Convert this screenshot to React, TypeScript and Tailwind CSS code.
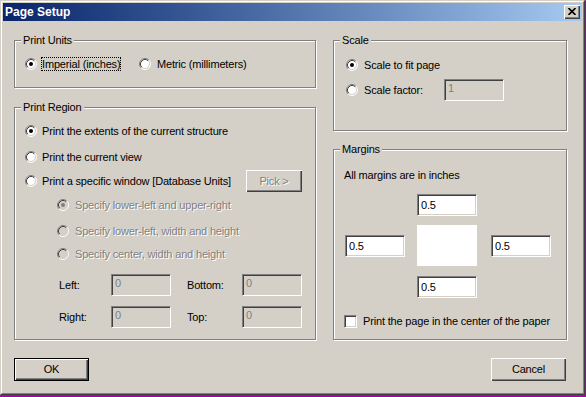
import React from "react";

const sunken =
  "border border-t-[#808080] border-l-[#808080] border-b-white border-r-white shadow-[inset_1px_1px_0_#404040,inset_-1px_-1px_0_#d4d0c8]";
const raised =
  "shadow-[inset_1px_1px_0_#fff,inset_-1px_-1px_0_#404040,inset_-2px_-2px_0_#808080]";
const disabledText = "text-[#808080] [text-shadow:1px_1px_0_#fff]";

function Radio({ checked = false, disabled = false }: { checked?: boolean; disabled?: boolean }) {
  return (
    <svg width="12" height="12" viewBox="0 0 12 12" className="shrink-0 block">
      <circle cx="6" cy="6" r="5" fill={disabled ? "#d4d0c8" : "#ffffff"} />
      <path d="M 2.11 9.89 A 5.5 5.5 0 0 1 9.89 2.11" stroke="#808080" strokeWidth="1" fill="none" />
      <path d="M 9.89 2.11 A 5.5 5.5 0 0 1 2.11 9.89" stroke="#ffffff" strokeWidth="1" fill="none" />
      <path d="M 2.82 9.18 A 4.5 4.5 0 0 1 9.18 2.82" stroke="#404040" strokeWidth="1" fill="none" />
      <path d="M 9.18 2.82 A 4.5 4.5 0 0 1 2.82 9.18" stroke="#d4d0c8" strokeWidth="1" fill="none" />
      {checked && <circle cx="6" cy="6" r="2" fill={disabled ? "#808080" : "#000000"} />}
    </svg>
  );
}

function Group({ label, className, children }: { label: string; className: string; children?: React.ReactNode }) {
  return (
    <div className={"relative border border-[#808080] shadow-[inset_1px_1px_0_#fff,1px_1px_0_#fff] " + className}>
      <span className="absolute left-[6px] top-[-8px] bg-[#d4d0c8] px-[2px] leading-[14px] whitespace-nowrap">
        {label}
      </span>
      {children}
    </div>
  );
}

function RadioRow({
  label,
  checked,
  disabled,
  focus,
  className = "",
  gap = "ml-[4px]",
}: {
  label: string;
  checked?: boolean;
  disabled?: boolean;
  focus?: boolean;
  className?: string;
  gap?: string;
}) {
  return (
    <div className={"flex items-center " + className}>
      <Radio checked={checked} disabled={disabled} />
      <span
        className={
          gap +
          " border leading-[12px] whitespace-nowrap " +
          (focus ? "border-dotted border-black " : "border-transparent ") +
          (disabled ? disabledText : "")
        }
      >
        {label}
      </span>
    </div>
  );
}

function Field({ value, disabled = false }: { value: string; disabled?: boolean }) {
  return (
    <div
      className={
        sunken +
        " w-[60px] h-[22px] shrink-0 flex items-start pl-[3px] " +
        (disabled ? "bg-[#d4d0c8] text-[#808080] pt-[1px]" : "bg-white text-black pt-[3px]")
      }
    >
      <span className="leading-[14px]">{value}</span>
    </div>
  );
}

export default function App() {
  return (
    <div className="w-[586px] h-[397px] bg-[#b000b0] overflow-hidden">
      <div
        className="w-[585px] h-[395px] bg-[#d4d0c8] border border-t-[#d4d0c8] border-l-[#d4d0c8] border-b-[#404040] border-r-[#404040] text-black text-[11px] tracking-[-0.17px]"
        style={{ fontFamily: '"Liberation Sans", Arial, sans-serif' }}
      >
        <div className="h-full border border-t-white border-l-white border-b-[#808080] border-r-[#808080] p-[1px] flex flex-col">
          {/* Title bar */}
          <div className="h-[18px] shrink-0 flex items-center justify-between bg-gradient-to-r from-[#0a246a] to-[#a6caf0] pl-[2px] pr-[2px]">
            <span className="text-white font-bold text-[12px] tracking-normal leading-[18px]">Page Setup</span>
            <div className={"w-[16px] h-[14px] bg-[#d4d0c8] flex items-center justify-center " + raised}>
              <svg width="8" height="7" viewBox="0 0 8 7" className="block -mt-[1px] -ml-[1px]">
                <path d="M0.5 0 L7.5 7 M7.5 0 L0.5 7" stroke="#000" strokeWidth="1.6" />
              </svg>
            </div>
          </div>

          {/* Body */}
          <div className="flex flex-col pt-[19px] pl-[11px]">
            <div className="flex gap-[17px]">
              {/* Left column */}
              <div className="flex flex-col gap-[19px] w-[302px]">
                <Group label="Print Units" className="h-[48px]">
                  <div className="flex items-center pt-[16px] pl-[10px] h-[30px]">
                    <div className="w-[114px]">
                      <RadioRow label="Imperial (inches)" checked focus />
                    </div>
                    <RadioRow label="Metric (millimeters)" gap="ml-[5px]" />
                  </div>
                </Group>

                <Group label="Print Region" className="h-[233px]">
                  <div className="flex flex-col pl-[10px]">
                    <RadioRow label="Print the extents of the current structure" checked className="mt-[16px] h-[14px]" />
                    <RadioRow label="Print the current view" className="mt-[12px] h-[14px]" />
                    <div className="mt-[6px] h-[22px] flex items-center pr-[13px]">
                      <RadioRow label="Print a specific window [Database Units]" />
                      <div
                        className={
                          "ml-auto w-[56px] h-[22px] bg-[#d4d0c8] flex items-center justify-center " +
                          raised +
                          " " +
                          disabledText
                        }
                      >
                        Pick &gt;
                      </div>
                    </div>
                    <div className="flex flex-col pl-[32px]">
                      <RadioRow label="Specify lower-left and upper-right" checked disabled gap="ml-[5px]" className="mt-[6px] h-[14px]" />
                      <RadioRow label="Specify lower-left, width and height" disabled gap="ml-[5px]" className="mt-[12px] h-[14px]" />
                      <RadioRow label="Specify center, width and height" disabled gap="ml-[5px]" className="mt-[9px] h-[14px]" />
                    </div>
                    <div className="mt-[13px] flex items-center pl-[34px]">
                      <span className="w-[52px]">Left:</span>
                      <Field value="0" disabled />
                      <span className="ml-[16px] w-[55px]">Bottom:</span>
                      <Field value="0" disabled />
                    </div>
                    <div className="mt-[10px] flex items-center pl-[34px]">
                      <span className="w-[52px]">Right:</span>
                      <Field value="0" disabled />
                      <span className="ml-[16px] w-[55px]">Top:</span>
                      <Field value="0" disabled />
                    </div>
                  </div>
                </Group>
              </div>

              {/* Right column */}
              <div className="flex flex-col gap-[18px] w-[234px]">
                <Group label="Scale" className="h-[91px]">
                  <div className="flex flex-col pl-[12px]">
                    <RadioRow label="Scale to fit page" checked gap="ml-[5px]" className="mt-[17px] h-[14px]" />
                    <div className="mt-[7px] h-[22px] flex items-center">
                      <div className="w-[98px]">
                        <RadioRow label="Scale factor:" gap="ml-[5px]" />
                      </div>
                      <Field value="1" disabled />
                    </div>
                  </div>
                </Group>

                <Group label="Margins" className="h-[191px]">
                  <div className="flex flex-col">
                    <div className="mt-[18px] h-[14px] pl-[10px] leading-[14px]">All margins are in inches</div>
                    <div className="mt-[12px] pl-[83px]">
                      <Field value="0.5" />
                    </div>
                    <div className="mt-[9px] h-[41px] flex items-center pl-[11px]">
                      <Field value="0.5" />
                      <div className="ml-[12px] w-[60px] h-[41px] bg-white" />
                      <div className="ml-[14px]">
                        <Field value="0.5" />
                      </div>
                    </div>
                    <div className="mt-[10px] pl-[83px]">
                      <Field value="0.5" />
                    </div>
                    <div className="mt-[16px] h-[14px] flex items-center pl-[10px]">
                      <div className={sunken + " w-[13px] h-[13px] bg-white shrink-0"} />
                      <span className="ml-[6px] leading-[14px] whitespace-nowrap">Print the page in the center of the paper</span>
                    </div>
                  </div>
                </Group>
              </div>
            </div>

            {/* Buttons */}
            <div className="mt-[18px] flex justify-between w-[553px]">
              <div className="w-[75px] h-[23px] border border-black">
                <div className={"w-full h-full bg-[#d4d0c8] flex items-center justify-center " + raised}>OK</div>
              </div>
              <div className={"w-[75px] h-[23px] bg-[#d4d0c8] flex items-center justify-center mr-[1px] " + raised}>
                Cancel
              </div>
            </div>
          </div>
        </div>
      </div>
    </div>
  );
}
